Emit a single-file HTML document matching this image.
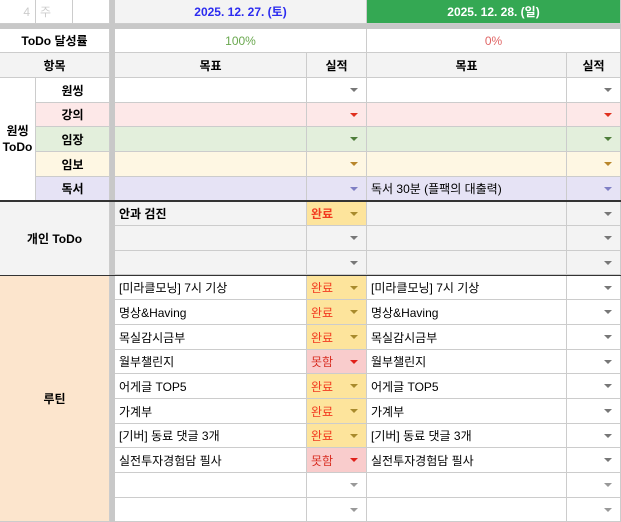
<!DOCTYPE html>
<html><head><meta charset="utf-8"><style>
*{margin:0;padding:0;box-sizing:border-box}
body{width:621px;height:522px;overflow:hidden;background:#fff;font-family:"Liberation Sans","Noto Sans CJK KR",sans-serif;font-size:12px;color:#000;position:relative}
.c{position:absolute;border-right:1px solid #ccc;border-bottom:1px solid #ccc;display:flex;align-items:center;white-space:nowrap;overflow:hidden;padding-left:4px}
.ctr{justify-content:center;padding-left:0}
.b{font-weight:bold}
.a{position:absolute;right:8px;top:50%;margin-top:-2px;width:0;height:0;border-left:4px solid transparent;border-right:4px solid transparent;border-top:4px solid #777}
.g1{left:115px;width:192px}.g2{left:307px;width:60px}.g3{left:367px;width:200px}.g4{left:567px;width:54px}
.ok{background:#fde49c;color:#f23a1f}.ok .a{border-top-color:#a88a2c}
.no{background:#f9cccc;color:#d93025}.no .a{border-top-color:#e0201a}
</style></head><body>
<!-- gray dividers -->
<div style="position:absolute;left:110px;top:0;width:5px;height:522px;background:#c8c8c8"></div>
<div style="position:absolute;left:0;top:24px;width:621px;height:5px;background:#c8c8c8"></div>

<!-- row 0 -->
<div class="c" style="left:0;top:0;width:36px;height:24px;justify-content:flex-end;padding-right:5px;color:#ccc">4</div>
<div class="c" style="left:36px;top:0;width:37px;height:24px;color:#ccc">주</div>
<div class="c" style="left:73px;top:0;width:37px;height:24px"></div>
<div class="c ctr b" style="left:115px;top:0;width:252px;height:24px;background:#f3f3f3;color:#2b2bf0">2025. 12. 27. (토)</div>
<div class="c ctr b" style="left:367px;top:0;width:254px;height:24px;background:#34a853;color:#fff">2025. 12. 28. (일)</div>

<!-- row 1 -->
<div class="c ctr b" style="left:0;top:29px;width:110px;height:24px">ToDo 달성률</div>
<div class="c ctr" style="left:115px;top:29px;width:252px;height:24px;color:#6aa84f">100%</div>
<div class="c ctr" style="left:367px;top:29px;width:254px;height:24px;color:#e06666">0%</div>

<!-- row 2 -->
<div class="c ctr b" style="left:0;top:53px;width:110px;height:25px;background:#f3f3f3">항목</div>
<div class="c ctr b g1" style="top:53px;height:25px;background:#f3f3f3">목표</div>
<div class="c ctr b g2" style="top:53px;height:25px;background:#f3f3f3">실적</div>
<div class="c ctr b g3" style="top:53px;height:25px;background:#f3f3f3">목표</div>
<div class="c ctr b g4" style="top:53px;height:25px;background:#f3f3f3">실적</div>

<!-- one thing -->
<div class="c ctr b" style="left:0;top:78px;width:36px;height:123px;text-align:center;white-space:normal;line-height:16px">원씽<br>ToDo</div>

<div class="c ctr b" style="left:36px;top:78px;width:74px;height:25px">원씽</div>
<div class="c g1" style="top:78px;height:25px"></div>
<div class="c g2" style="top:78px;height:25px"><span class="a"></span></div>
<div class="c g3" style="top:78px;height:25px"></div>
<div class="c g4" style="top:78px;height:25px"><span class="a"></span></div>

<div class="c ctr b" style="left:36px;top:103px;width:74px;height:24px;background:#fde8e8">강의</div>
<div class="c g1" style="top:103px;height:24px;background:#fde8e8"></div>
<div class="c g2" style="top:103px;height:24px;background:#fde8e8"><span class="a" style="border-top-color:#e0301e"></span></div>
<div class="c g3" style="top:103px;height:24px;background:#fde8e8"></div>
<div class="c g4" style="top:103px;height:24px;background:#fde8e8"><span class="a" style="border-top-color:#e0301e"></span></div>

<div class="c ctr b" style="left:36px;top:127px;width:74px;height:25px;background:#e3efdc">임장</div>
<div class="c g1" style="top:127px;height:25px;background:#e3efdc"></div>
<div class="c g2" style="top:127px;height:25px;background:#e3efdc"><span class="a" style="border-top-color:#4e7d3a"></span></div>
<div class="c g3" style="top:127px;height:25px;background:#e3efdc"></div>
<div class="c g4" style="top:127px;height:25px;background:#e3efdc"><span class="a" style="border-top-color:#4e7d3a"></span></div>

<div class="c ctr b" style="left:36px;top:152px;width:74px;height:25px;background:#fef7e3">임보</div>
<div class="c g1" style="top:152px;height:25px;background:#fef7e3"></div>
<div class="c g2" style="top:152px;height:25px;background:#fef7e3"><span class="a" style="border-top-color:#b8862b"></span></div>
<div class="c g3" style="top:152px;height:25px;background:#fef7e3"></div>
<div class="c g4" style="top:152px;height:25px;background:#fef7e3"><span class="a" style="border-top-color:#b8862b"></span></div>

<div class="c ctr b" style="left:36px;top:177px;width:74px;height:24px;background:#e6e3f5">독서</div>
<div class="c g1" style="top:177px;height:24px;background:#e6e3f5"></div>
<div class="c g2" style="top:177px;height:24px;background:#e6e3f5"><span class="a" style="border-top-color:#7f7fc4"></span></div>
<div class="c g3" style="top:177px;height:24px;background:#e6e3f5">독서 30분 (플팩의 대출력)</div>
<div class="c g4" style="top:177px;height:24px;background:#e6e3f5"><span class="a" style="border-top-color:#7f7fc4"></span></div>

<div style="position:absolute;left:0;top:200px;width:621px;height:2px;background:#333"></div>

<!-- personal -->
<div class="c ctr b" style="left:0;top:202px;width:110px;height:74px;background:#f3f3f3">개인 ToDo</div>
<div class="c g1 b" style="top:202px;height:24px;background:#f3f3f3">안과 검진</div>
<div class="c g2 ok b" style="top:202px;height:24px">완료<span class="a"></span></div>
<div class="c g3" style="top:202px;height:24px;background:#f3f3f3"></div>
<div class="c g4" style="top:202px;height:24px;background:#f3f3f3"><span class="a"></span></div>
<div class="c g1" style="top:226px;height:25px;background:#f3f3f3"></div>
<div class="c g2" style="top:226px;height:25px;background:#f3f3f3"><span class="a"></span></div>
<div class="c g3" style="top:226px;height:25px;background:#f3f3f3"></div>
<div class="c g4" style="top:226px;height:25px;background:#f3f3f3"><span class="a"></span></div>
<div class="c g1" style="top:251px;height:24px;background:#f3f3f3"></div>
<div class="c g2" style="top:251px;height:24px;background:#f3f3f3"><span class="a"></span></div>
<div class="c g3" style="top:251px;height:24px;background:#f3f3f3"></div>
<div class="c g4" style="top:251px;height:24px;background:#f3f3f3"><span class="a"></span></div>

<div style="position:absolute;left:0;top:275px;width:621px;height:1px;background:#333"></div>

<!-- routine -->
<div class="c ctr b" style="left:0;top:276px;width:110px;height:246px;background:#fce5cd">루틴</div>

<div class="c g1" style="top:276px;height:24px">[미라클모닝] 7시 기상</div>
<div class="c g2 ok" style="top:276px;height:24px">완료<span class="a"></span></div>
<div class="c g3" style="top:276px;height:24px">[미라클모닝] 7시 기상</div>
<div class="c g4" style="top:276px;height:24px"><span class="a"></span></div>

<div class="c g1" style="top:300px;height:25px">명상&amp;Having</div>
<div class="c g2 ok" style="top:300px;height:25px">완료<span class="a"></span></div>
<div class="c g3" style="top:300px;height:25px">명상&amp;Having</div>
<div class="c g4" style="top:300px;height:25px"><span class="a"></span></div>

<div class="c g1" style="top:325px;height:25px">목실감시금부</div>
<div class="c g2 ok" style="top:325px;height:25px">완료<span class="a"></span></div>
<div class="c g3" style="top:325px;height:25px">목실감시금부</div>
<div class="c g4" style="top:325px;height:25px"><span class="a"></span></div>

<div class="c g1" style="top:350px;height:24px">월부챌린지</div>
<div class="c g2 no" style="top:350px;height:24px">못함<span class="a"></span></div>
<div class="c g3" style="top:350px;height:24px">월부챌린지</div>
<div class="c g4" style="top:350px;height:24px"><span class="a"></span></div>

<div class="c g1" style="top:374px;height:25px">어게글 TOP5</div>
<div class="c g2 ok" style="top:374px;height:25px">완료<span class="a"></span></div>
<div class="c g3" style="top:374px;height:25px">어게글 TOP5</div>
<div class="c g4" style="top:374px;height:25px"><span class="a"></span></div>

<div class="c g1" style="top:399px;height:25px">가계부</div>
<div class="c g2 ok" style="top:399px;height:25px">완료<span class="a"></span></div>
<div class="c g3" style="top:399px;height:25px">가계부</div>
<div class="c g4" style="top:399px;height:25px"><span class="a"></span></div>

<div class="c g1" style="top:424px;height:24px">[기버] 동료 댓글 3개</div>
<div class="c g2 ok" style="top:424px;height:24px">완료<span class="a"></span></div>
<div class="c g3" style="top:424px;height:24px">[기버] 동료 댓글 3개</div>
<div class="c g4" style="top:424px;height:24px"><span class="a"></span></div>

<div class="c g1" style="top:448px;height:25px">실전투자경험담 필사</div>
<div class="c g2 no" style="top:448px;height:25px">못함<span class="a"></span></div>
<div class="c g3" style="top:448px;height:25px">실전투자경험담 필사</div>
<div class="c g4" style="top:448px;height:25px"><span class="a"></span></div>

<div class="c g1" style="top:473px;height:25px"></div>
<div class="c g2" style="top:473px;height:25px"><span class="a" style="border-top-color:#999"></span></div>
<div class="c g3" style="top:473px;height:25px"></div>
<div class="c g4" style="top:473px;height:25px"><span class="a" style="border-top-color:#999"></span></div>

<div class="c g1" style="top:498px;height:24px"></div>
<div class="c g2" style="top:498px;height:24px"><span class="a" style="border-top-color:#999"></span></div>
<div class="c g3" style="top:498px;height:24px"></div>
<div class="c g4" style="top:498px;height:24px"><span class="a" style="border-top-color:#999"></span></div>
</body></html>
